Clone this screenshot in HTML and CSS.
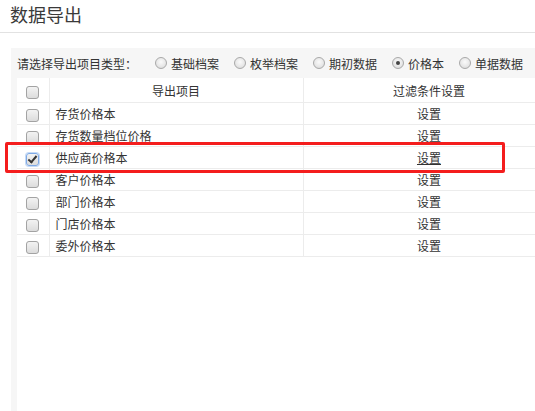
FILE: index.html
```html
<!DOCTYPE html>
<html lang="zh-CN">
  <head>
    <meta charset="UTF-8" />
    <title>数据导出</title>
    <link rel="stylesheet" href="styles.css">
  </head>
  <body>
    <div class="page">
      <h1 class="page-title">数据导出</h1>

      <div class="panel">
        <div class="type-bar">
          <span class="type-label">请选择导出项目类型：</span>
          <label class="radio"><span class="radio-dot"></span>基础档案</label>
          <label class="radio"><span class="radio-dot"></span>枚举档案</label>
          <label class="radio"><span class="radio-dot"></span>期初数据</label>
          <label class="radio checked"><span class="radio-dot"></span>价格本</label>
          <label class="radio"><span class="radio-dot"></span>单据数据</label>
        </div>

        <div class="sheet">
          <table class="export-table">
            <colgroup>
              <col class="col-check" />
              <col class="col-name" />
              <col class="col-filter" />
            </colgroup>
            <thead>
              <tr>
                <th><span class="checkbox"></span></th>
                <th>导出项目</th>
                <th>过滤条件设置</th>
              </tr>
            </thead>
            <tbody>
              <tr>
                <td class="cell-check"><span class="checkbox"></span></td>
                <td class="cell-name">存货价格本</td>
                <td class="cell-filter">设置</td>
              </tr>
              <tr>
                <td class="cell-check"><span class="checkbox"></span></td>
                <td class="cell-name">存货数量档位价格</td>
                <td class="cell-filter">设置</td>
              </tr>
              <tr>
                <td class="cell-check"><span class="checkbox checked"></span></td>
                <td class="cell-name">供应商价格本</td>
                <td class="cell-filter"><span class="link-hover">设置</span></td>
              </tr>
              <tr>
                <td class="cell-check"><span class="checkbox"></span></td>
                <td class="cell-name">客户价格本</td>
                <td class="cell-filter">设置</td>
              </tr>
              <tr>
                <td class="cell-check"><span class="checkbox"></span></td>
                <td class="cell-name">部门价格本</td>
                <td class="cell-filter">设置</td>
              </tr>
              <tr>
                <td class="cell-check"><span class="checkbox"></span></td>
                <td class="cell-name">门店价格本</td>
                <td class="cell-filter">设置</td>
              </tr>
              <tr>
                <td class="cell-check"><span class="checkbox"></span></td>
                <td class="cell-name">委外价格本</td>
                <td class="cell-filter">设置</td>
              </tr>
            </tbody>
          </table>
        </div>
      </div>

      <!-- annotation box drawn over the selected row -->
      <div class="highlight"></div>
    </div>
  </body>
</html>
```

FILE: styles.css
```css
html,
body {
  margin: 0;
  height: 100%;
  overflow: hidden;
}

body {
  font-family: "Noto Sans CJK SC", "Noto Sans", sans-serif;
  font-size: 12px;
  color: #333;
  background: #fff;
}

.page {
  position: relative;
  height: 100%;
  display: flex;
  flex-direction: column;
}

.page-title {
  margin: 0;
  padding: 0 10px;
  height: 32px;
  line-height: 29px;
  font-size: 18px;
  font-weight: normal;
  color: #3a3a3a;
  border-bottom: 1px solid #e2e2e2;
}

.panel {
  flex: 1;
  display: flex;
  flex-direction: column;
  margin: 15px 0 0 11px;
  padding-left: 6px;
  background: #f6f6f6;
  min-width: 0;
}

.type-bar {
  display: flex;
  align-items: center;
  height: 30px;
  white-space: nowrap;
}

.type-label {
  margin-right: 18px;
}

.radio {
  display: flex;
  align-items: center;
  margin-right: 15px;
}

.radio-dot {
  position: relative;
  width: 10px;
  height: 10px;
  margin-right: 4px;
  border: 1px solid #a9a9a9;
  border-radius: 50%;
  background: radial-gradient(circle at 50% 40%, #fafafa 0%, #e6e6e6 60%, #d2d2d2 100%);
}

.radio.checked .radio-dot::after {
  content: "";
  position: absolute;
  left: 3px;
  top: 3px;
  width: 4px;
  height: 4px;
  border-radius: 50%;
  background: #444;
}

.sheet {
  flex: 1;
  background: #fff;
  overflow: hidden;
}

.export-table {
  width: 538px;
  table-layout: fixed;
  border-collapse: collapse;
}

.col-check {
  width: 32px;
}

.col-name {
  width: 254px;
}

.col-filter {
  width: 252px;
}

.export-table th,
.export-table td {
  padding: 0;
  border-bottom: 1px solid #ececec;
  border-right: 1px solid #ececec;
  font-weight: normal;
  white-space: nowrap;
}

.export-table th {
  height: 24px;
  text-align: center;
}

.export-table td {
  height: 21px;
}

.cell-check {
  text-align: center;
}

.cell-name {
  padding-left: 6px !important;
}

.cell-filter {
  text-align: center;
}

.checkbox {
  display: inline-block;
  vertical-align: middle;
  position: relative;
  width: 11px;
  height: 11px;
  border: 1px solid #a3a3a3;
  border-radius: 3px;
  background: linear-gradient(#f3f3f3, #dcdcdc);
}

.checkbox.checked {
  border-color: #7ea9e6;
  box-shadow: 0 0 0 1px #c5daf6;
}

.checkbox.checked::after {
  content: "";
  position: absolute;
  left: 3px;
  top: 0;
  width: 3px;
  height: 7px;
  border: solid #333;
  border-width: 0 2px 2px 0;
  transform: rotate(40deg);
}

.link-hover {
  text-decoration: underline;
}

.highlight {
  position: absolute;
  left: 5px;
  top: 142px;
  width: 500px;
  height: 31px;
  box-sizing: border-box;
  border: 3px solid #f41d1d;
  border-radius: 2px;
}
```
